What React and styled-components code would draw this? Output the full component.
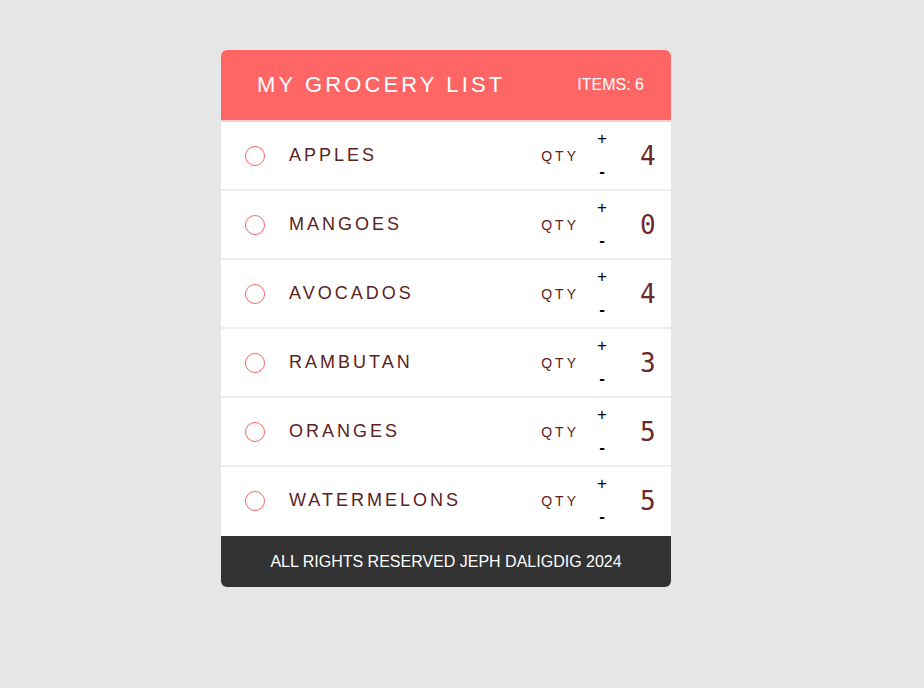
import React from "react";
import styled, { createGlobalStyle } from "styled-components";

const GlobalStyle = createGlobalStyle`
  html, body { margin: 0; padding: 0; background: #e6e6e6; }
  body { font-family: "Liberation Sans", Arial, sans-serif; }
`;

const Page = styled.div`
  min-height: 688px;
  display: flex;
  justify-content: center;
  align-items: flex-start;
  padding: 50px 32px 0 0;
  box-sizing: border-box;
`;

const Card = styled.div`
  width: 450px;
  border-radius: 6px;
  overflow: hidden;
  background: #fff;
`;

const Header = styled.header`
  height: 70px;
  background: #fe6666;
  display: flex;
  align-items: center;
  justify-content: space-between;
  padding: 0 27px 0 36px;
  color: #fff;
`;

const Title = styled.h1`
  margin: 0;
  font-size: 22px;
  font-weight: normal;
  letter-spacing: 3.1px;
`;

const Count = styled.span`
  font-size: 16px;
`;

const List = styled.ul`
  list-style: none;
  margin: 0;
  padding: 0 0 2px;
`;

const Row = styled.li`
  height: 67px;
  display: flex;
  align-items: center;
  padding: 0 15px 0 24px;
  border-top: 2px solid ${(p) => (p.$first ? "#ffcccc" : "#ececec")};
`;

const Check = styled.span`
  width: 18px;
  height: 18px;
  border: 1px solid #f86464;
  border-radius: 50%;
  margin-right: 24px;
  flex: none;
`;

const Name = styled.span`
  flex: 1;
  font-size: 18px;
  letter-spacing: 3px;
  color: #5c2222;
`;

const QtyLabel = styled.span`
  font-size: 14px;
  letter-spacing: 3px;
  color: #5c2222;
`;

const Controls = styled.div`
  width: 10px;
  margin: 0 18px;
  display: flex;
  flex-direction: column;
  align-items: center;
  gap: 17px;
`;

const StepButton = styled.button`
  background: none;
  border: none;
  padding: 0;
  font-family: "Liberation Sans", Arial, sans-serif;
  font-size: 17px;
  font-weight: ${(p) => (p.$strong ? "bold" : "normal")};
  line-height: 16px;
  height: 16px;
  color: #000;
  cursor: pointer;
`;

const Amount = styled.span`
  margin-left: 15px;
  width: 16px;
  font-family: "DejaVu Sans Mono", monospace;
  font-variant-numeric: slashed-zero;
  font-size: 26px;
  font-weight: 300;
  color: #6a2a2a;
`;

const Footer = styled.footer`
  height: 51px;
  background: #333333;
  color: #fff;
  display: flex;
  align-items: center;
  justify-content: center;
  font-size: 16px;
`;

const items = [
  { name: "APPLES", qty: 4 },
  { name: "MANGOES", qty: 0 },
  { name: "AVOCADOS", qty: 4 },
  { name: "RAMBUTAN", qty: 3 },
  { name: "ORANGES", qty: 5 },
  { name: "WATERMELONS", qty: 5 },
];

export default function App() {
  return (
    <>
      <GlobalStyle />
      <Page>
        <Card>
          <Header>
            <Title>MY GROCERY LIST</Title>
            <Count>ITEMS: {items.length}</Count>
          </Header>
          <List>
            {items.map((it, i) => (
              <Row key={it.name} $first={i === 0}>
                <Check />
                <Name>{it.name}</Name>
                <QtyLabel>QTY</QtyLabel>
                <Controls>
                  <StepButton>+</StepButton>
                  <StepButton $strong>-</StepButton>
                </Controls>
                <Amount>{it.qty}</Amount>
              </Row>
            ))}
          </List>
          <Footer>ALL RIGHTS RESERVED JEPH DALIGDIG 2024</Footer>
        </Card>
      </Page>
    </>
  );
}
